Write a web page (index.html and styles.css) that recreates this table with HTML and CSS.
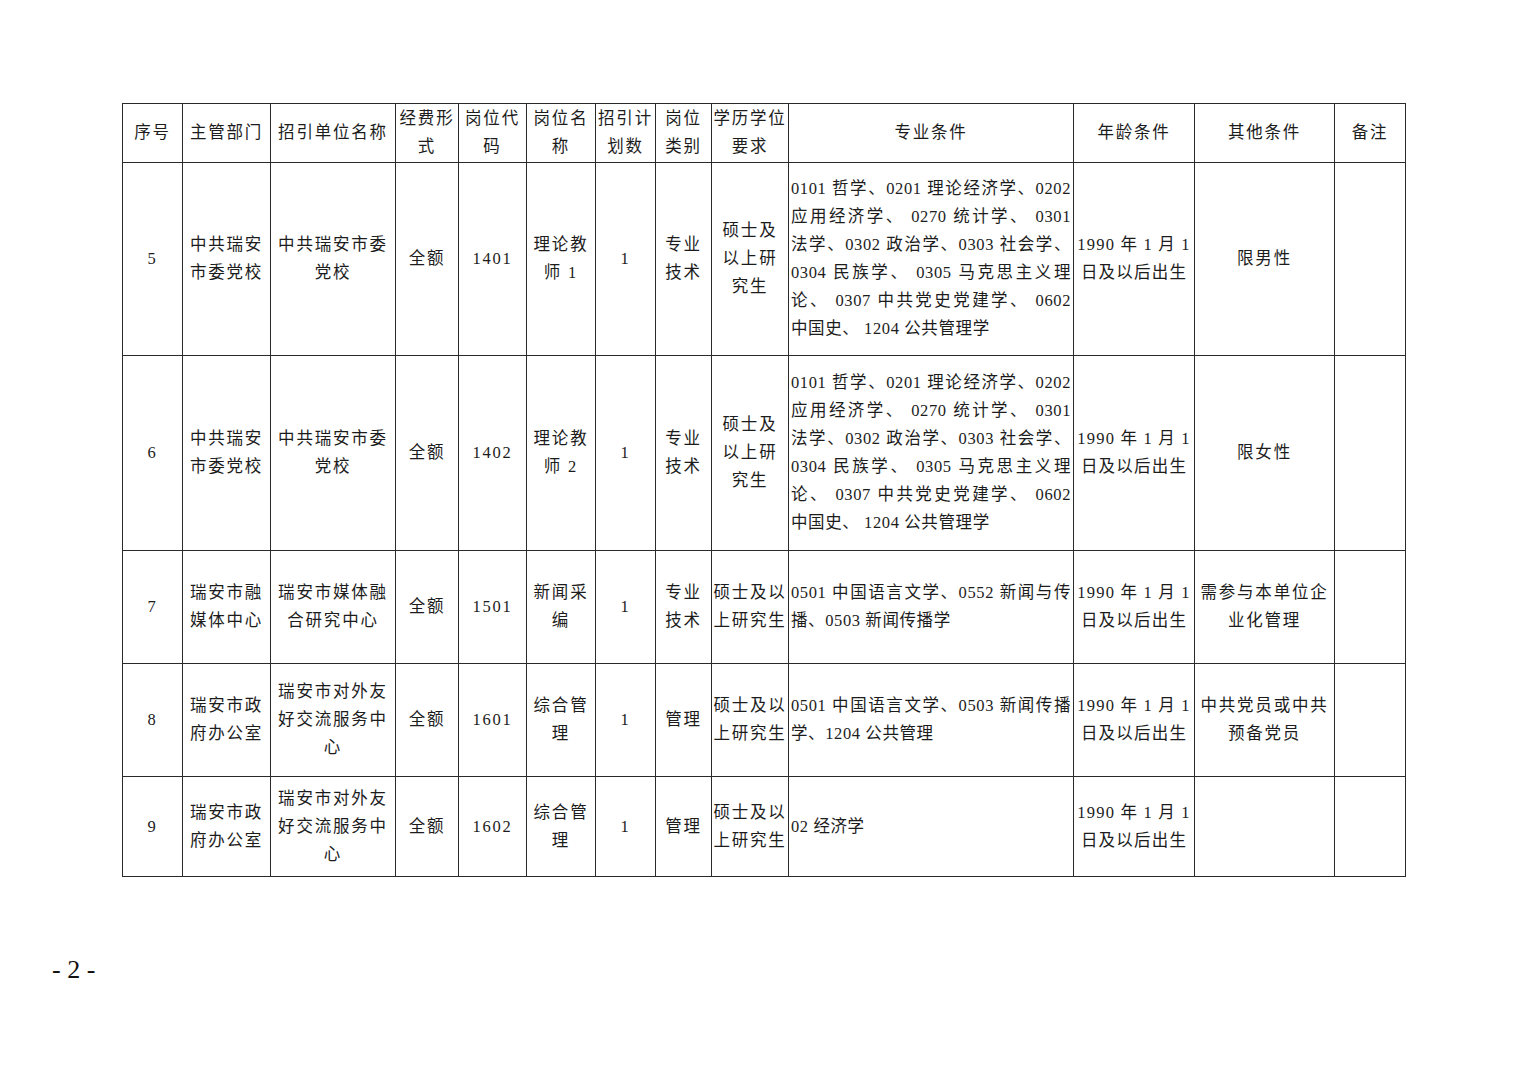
FILE: index.html
```html
<!DOCTYPE html>
<html lang="zh">
<head>
<meta charset="utf-8">
<title>招引计划表</title>
<link rel="stylesheet" href="styles.css">
</head>
<body>
<div class="page">
<table class="grid">
<colgroup>
<col class="c1"><col class="c2"><col class="c3"><col class="c4"><col class="c5"><col class="c6"><col class="c7"><col class="c8"><col class="c9"><col class="c10"><col class="c11"><col class="c12"><col class="c13">
</colgroup>
<thead>
<tr class="h">
<th>序号</th><th>主管部门</th><th>招引单位名称</th><th>经费形<br>式</th><th>岗位代<br>码</th><th>岗位名<br>称</th><th>招引计<br>划数</th><th>岗位<br>类别</th><th>学历学位<br>要求</th><th>专业条件</th><th>年龄条件</th><th>其他条件</th><th>备注</th>
</tr>
</thead>
<tbody>
<tr class="r5">
<td>5</td><td>中共瑞安<br>市委党校</td><td>中共瑞安市委<br>党校</td><td>全额</td><td>1401</td><td>理论教<br>师 1</td><td>1</td><td>专业<br>技术</td><td>硕士及<br>以上研<br>究生</td>
<td class="cond"><div class="j">0101 哲学、0201 理论经济学、0202</div><div class="j">应用经济学、 0270 统计学、 0301</div><div class="j">法学、0302 政治学、0303 社会学、</div><div class="j">0304 民族学、 0305 马克思主义理</div><div class="j">论、 0307 中共党史党建学、 0602</div><div>中国史、 1204 公共管理学</div></td>
<td class="age">1990 年 1 月 1<br>日及以后出生</td><td>限男性</td><td></td>
</tr>
<tr class="r6">
<td>6</td><td>中共瑞安<br>市委党校</td><td>中共瑞安市委<br>党校</td><td>全额</td><td>1402</td><td>理论教<br>师 2</td><td>1</td><td>专业<br>技术</td><td>硕士及<br>以上研<br>究生</td>
<td class="cond"><div class="j">0101 哲学、0201 理论经济学、0202</div><div class="j">应用经济学、 0270 统计学、 0301</div><div class="j">法学、0302 政治学、0303 社会学、</div><div class="j">0304 民族学、 0305 马克思主义理</div><div class="j">论、 0307 中共党史党建学、 0602</div><div>中国史、 1204 公共管理学</div></td>
<td class="age">1990 年 1 月 1<br>日及以后出生</td><td>限女性</td><td></td>
</tr>
<tr class="r7">
<td>7</td><td>瑞安市融<br>媒体中心</td><td>瑞安市媒体融<br>合研究中心</td><td>全额</td><td>1501</td><td>新闻采<br>编</td><td>1</td><td>专业<br>技术</td><td>硕士及以<br>上研究生</td>
<td class="cond"><div class="j">0501 中国语言文学、0552 新闻与传</div><div>播、0503 新闻传播学</div></td>
<td class="age">1990 年 1 月 1<br>日及以后出生</td><td>需参与本单位企<br>业化管理</td><td></td>
</tr>
<tr class="r8">
<td>8</td><td>瑞安市政<br>府办公室</td><td>瑞安市对外友<br>好交流服务中<br>心</td><td>全额</td><td>1601</td><td>综合管<br>理</td><td>1</td><td>管理</td><td>硕士及以<br>上研究生</td>
<td class="cond"><div class="j">0501 中国语言文学、0503 新闻传播</div><div>学、1204 公共管理</div></td>
<td class="age">1990 年 1 月 1<br>日及以后出生</td><td>中共党员或中共<br>预备党员</td><td></td>
</tr>
<tr class="r9">
<td>9</td><td>瑞安市政<br>府办公室</td><td>瑞安市对外友<br>好交流服务中<br>心</td><td>全额</td><td>1602</td><td>综合管<br>理</td><td>1</td><td>管理</td><td>硕士及以<br>上研究生</td>
<td class="cond"><div>02 经济学</div></td>
<td class="age">1990 年 1 月 1<br>日及以后出生</td><td></td><td></td>
</tr>
</tbody>
</table>
<div class="pageno">- 2 -</div>
</div>
</body>
</html>
```
FILE: styles.css
```css
html, body {
  margin: 0;
  padding: 0;
  background: #ffffff;
}
.page {
  padding: 103px 0 0 122px;
  font-family: "Liberation Serif", "Noto Sans CJK SC", serif;
  color: #1c1c1c;
}
.grid {
  border-collapse: collapse;
  table-layout: fixed;
  width: 1283px;
  font-size: 16.5px;
  line-height: 28px;
  letter-spacing: 1.8px;
}
.c1 { width: 60px; }
.c2 { width: 88px; }
.c3 { width: 125px; }
.c4 { width: 63px; }
.c5 { width: 68px; }
.c6 { width: 69px; }
.c7 { width: 60px; }
.c8 { width: 56px; }
.c9 { width: 77px; }
.c10 { width: 285px; }
.c11 { width: 121px; }
.c12 { width: 140px; }
.c13 { width: 71px; }
.grid th,
.grid td {
  border: 1px solid #2a2a2a;
  padding: 0 1px;
  text-align: center;
  vertical-align: middle;
  font-weight: normal;
  overflow: hidden;
}
.h { height: 59px; }
.r5 { height: 193px; }
.r6 { height: 195px; }
.r7 { height: 113px; }
.r8 { height: 113px; }
.r9 { height: 100px; }
.grid td.cond {
  text-align: left;
  padding: 0 2px 0 2px;
  letter-spacing: 0.6px;
}
.cond .j {
  text-align: justify;
  text-align-last: justify;
}
.grid td.age {
  white-space: nowrap;
  letter-spacing: 1.2px;
}
.pageno {
  margin: 78px 0 0 -70px;
  font-family: "Liberation Serif", serif;
  font-size: 26px;
  line-height: 30px;
  color: #111;
}
```
